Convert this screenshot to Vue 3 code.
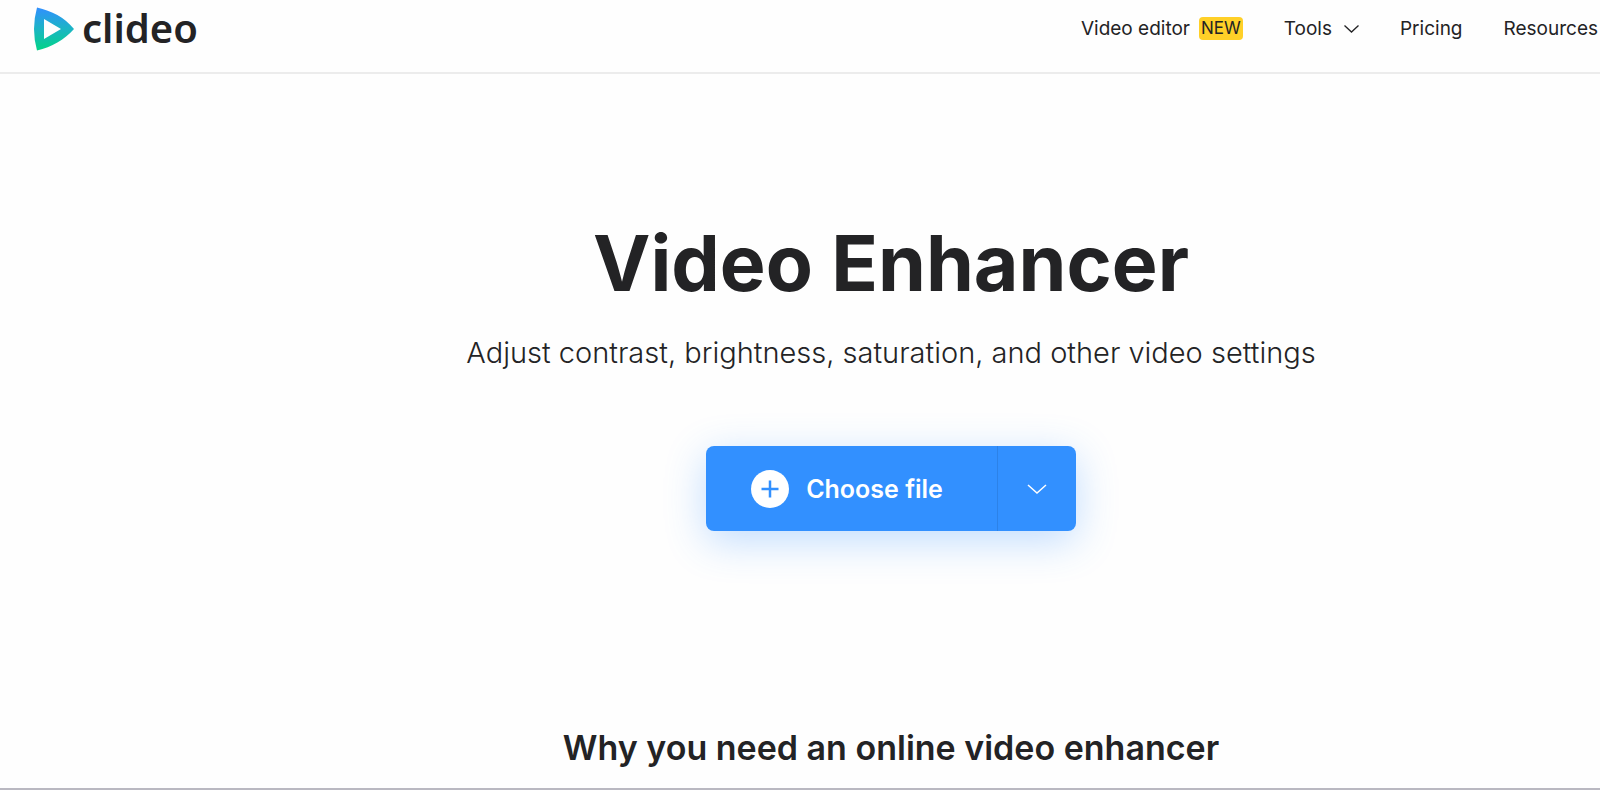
<script setup>
const after = [
  { label: 'Pricing', href: '#pricing' },
  { label: 'Resources', href: '#resources' },
]
</script>

<template>
  <div class="page">
    <header class="header">
      <a class="logo" href="#home" aria-label="clideo">
        <svg class="mark" viewBox="0 0 42 44" aria-hidden="true">
          <defs>
            <linearGradient id="mark-fill" x1="0" y1="0" x2="0" y2="1">
              <stop offset="0" stop-color="#318fff" />
              <stop offset="0.5" stop-color="#1bb5c4" />
              <stop offset="1" stop-color="#02d486" />
            </linearGradient>
          </defs>
          <path
            fill="url(#mark-fill)"
            fill-rule="evenodd"
            d="M4 0.500C19 4 31 10 41 22C31 33 19 40 4 43.500Q-2 22 4 0.500ZM11 12V32L28 22Z"
          />
        </svg>
        <span class="wordmark">clideo</span>
      </a>
      <nav class="nav">
        <a class="link" href="#editor">Video editor <span class="badge">NEW</span></a>
        <button class="link" type="button">
          Tools
          <svg class="caret" viewBox="0 0 15 8" aria-hidden="true">
            <path d="M0.500 0.500L7.500 7L14.500 0.500" fill="none" stroke="currentColor" stroke-width="1.300" />
          </svg>
        </button>
        <a v-for="item in after" :key="item.label" class="link" :href="item.href">{{ item.label }}</a>
      </nav>
    </header>

    <main class="main">
      <h1 class="title">Video Enhancer</h1>
      <p class="subtitle">Adjust contrast, brightness, saturation, and other video settings</p>
      <div class="upload">
        <button class="choose" type="button">
          <svg class="plus" viewBox="0 0 38 38" aria-hidden="true">
            <circle cx="19" cy="19" r="19" fill="#fff" />
            <path d="M19 10.500V27.500M10.500 19H27.500" stroke="#3290ff" stroke-width="2.500" />
          </svg>
          Choose file
        </button>
        <button class="more" type="button" aria-label="More sources">
          <svg class="more-caret" viewBox="0 0 20 10" aria-hidden="true">
            <path d="M1 1L10 9L19 1" fill="none" stroke="currentColor" stroke-width="1.500" />
          </svg>
        </button>
      </div>
      <h2 class="why">Why you need an online video enhancer</h2>
    </main>
  </div>
</template>

<style>
body {
  margin: 0;
  background: #fefefe;
}
</style>

<style scoped>
.page {
  box-sizing: border-box;
  min-height: 100vh;
  overflow: hidden;
  border-bottom: 2px solid #b9b8c1;
  color: #232325;
  font-family: Inter, "Liberation Sans", sans-serif;
}
.header {
  display: flex;
  align-items: center;
  justify-content: space-between;
  padding: 6px 2px 15px 33px;
  border-bottom: 2px solid #ececec;
}
.logo {
  display: flex;
  align-items: center;
  gap: 7px;
  height: 51px;
  color: #232325;
  text-decoration: none;
}
.mark {
  width: 42px;
  height: 44px;
  margin-bottom: 6px;
}
.wordmark {
  margin-bottom: 8px;
  font-family: "Noto Sans", sans-serif;
  font-size: 40px;
  font-weight: 600;
  line-height: 44px;
}
.nav {
  display: flex;
  align-items: center;
  gap: 41px;
  margin-bottom: 6px;
}
.link {
  display: flex;
  align-items: center;
  padding: 0;
  border: 0;
  background: none;
  color: #232325;
  font-family: inherit;
  font-size: 19px;
  line-height: 24px;
  text-decoration: none;
  white-space: nowrap;
}
.badge {
  margin-left: 9px;
  padding: 0 2px;
  border-radius: 4px;
  background: #ffd028;
  font-size: 17px;
  line-height: 23px;
}
.caret {
  width: 15px;
  height: 8px;
  margin-left: 12px;
}
.main {
  display: flex;
  flex-direction: column;
  align-items: center;
  padding: 141px 0 18px 182px;
}
.title {
  margin: 0;
  font-size: 77px;
  font-weight: 700;
  line-height: 96px;
}
.subtitle {
  margin: 22px 0 0;
  font-size: 29px;
  font-weight: 300;
  line-height: 40px;
}
.upload {
  display: flex;
  height: 85px;
  margin-top: 73px;
  border-radius: 8px;
  background: #3290ff;
  box-shadow: 0 10px 40px rgba(50, 144, 255, 0.3);
}
.choose,
.more {
  display: flex;
  align-items: center;
  border: 0;
  background: none;
  color: #fff;
  font: inherit;
}
.choose {
  gap: 17px;
  padding: 0 54px 0 45px;
  font-size: 25px;
  font-weight: 600;
}
.plus {
  width: 38px;
  height: 38px;
}
.more {
  justify-content: center;
  width: 79px;
  padding: 0;
  border-left: 1px solid #2c82e8;
}
.more-caret {
  width: 20px;
  height: 10px;
}
.why {
  margin: 196px 0 0;
  font-size: 34px;
  font-weight: 600;
  line-height: 42px;
}
</style>
